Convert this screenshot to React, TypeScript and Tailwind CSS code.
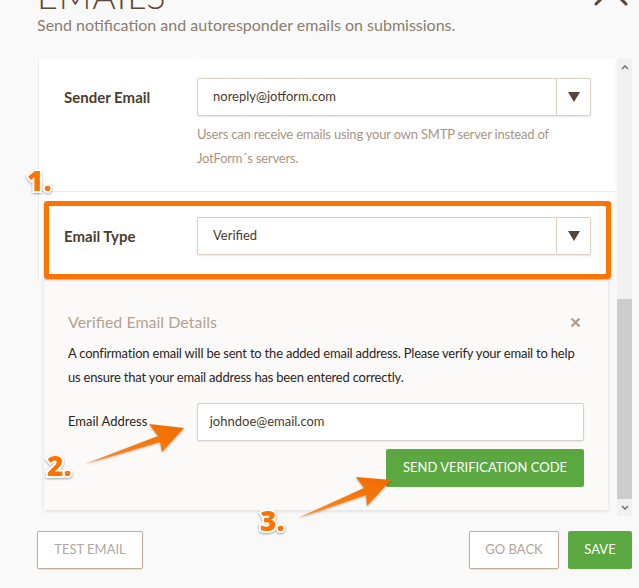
import React from "react";

const Caret = () => (
  <svg width="12" height="10" viewBox="0 0 12 10">
    <path d="M0 0h12L6 10z" fill="#56453a" />
  </svg>
);

const Select = ({ value }: { value: string }) => (
  <div className="flex h-[38px] w-[394px] items-stretch rounded-[2px] border border-[#dccfc3] bg-white shadow-[0_1px_2px_rgba(0,0,0,0.1)]">
    <div className="flex flex-1 items-center pl-[15px] text-[13px] text-[#4b3b2c]">{value}</div>
    <div className="flex w-[34px] items-center justify-center border-l border-[#dccfc3]">
      <Caret />
    </div>
  </div>
);

const Step = ({ n, className }: { n: string; className: string }) => (
  <span
    className={
      "absolute font-['Open_Sans',sans-serif] text-[28px] font-extrabold leading-none text-[#ff7300] [-webkit-text-stroke:4px_white] [paint-order:stroke_fill] drop-shadow-[0_1px_1px_rgba(0,0,0,0.35)] " +
      className
    }
  >
    {n}
  </span>
);

export default function App() {
  return (
    <div className="relative h-[588px] w-[639px] overflow-hidden bg-[#f9f9f9] font-['Lato',sans-serif]">
      <header className="pl-[37px]">
        <h1 className="-mt-[23px] text-[36px] font-light leading-none tracking-wide text-[#5b4837]">EMAILS</h1>
        <p className="mt-[2px] text-[16px] leading-[20px] text-[#8e7d6d]">
          Send notification and autoresponder emails on submissions.
        </p>
      </header>

      {/* close */}
      <svg className="absolute right-[11px] -top-[28px]" width="34" height="34" viewBox="0 0 34 34">
        <path d="M2 2l30 30M32 2L2 32" stroke="#5b4636" strokeWidth="3" strokeLinecap="round" />
      </svg>

      <div className="mt-[24px] flex h-[457px]">
        <div className="ml-[38px] flex w-[577px] flex-col">
          <div className="border-l border-[#ebebeb] bg-white">
            <div className="pb-[21px] pt-[19px]">
              <div className="flex items-center">
                <div className="w-[158px] pl-[25px] text-[15px] font-bold text-[#4e3d2e]">Sender Email</div>
                <Select value="noreply@jotform.com" />
              </div>
              <p className="ml-[158px] mt-[6px] w-[380px] text-[13px] leading-[24px] tracking-[-0.2px] text-[#a89684]">
                Users can receive emails using your own SMTP server instead of JotForm´s servers.
              </p>
            </div>
            <div className="flex items-center border-t border-[#ececec] pb-[24px] pt-[25px]">
              <div className="w-[158px] pl-[25px] text-[15px] font-bold text-[#4e3d2e]">Email Type</div>
              <Select value="Verified" />
            </div>
          </div>

          <div className="ml-[6px] w-[564px] bg-[#fbfaf9] px-[24px] pb-[23px] pt-[31px] shadow-[0_1px_4px_rgba(0,0,0,0.13)]">
            <div className="flex items-center justify-between">
              <h2 className="text-[16px] leading-[24px] text-[#b6a290]">Verified Email Details</h2>
              <svg className="mr-[3px]" width="11" height="11" viewBox="0 0 11 11">
                <path d="M1.5 1.5l8 8M9.5 1.5l-8 8" stroke="#b3a08e" strokeWidth="2.4" />
              </svg>
            </div>
            <p className="mt-[7px] text-[13px] leading-[24px] tracking-[-0.2px] text-[#2d2520]">
              A confirmation email will be sent to the added email address. Please verify your email to help us ensure
              that your email address has been entered correctly.
            </p>
            <div className="mt-[14px] flex items-center">
              <div className="w-[129px] text-[13px] text-[#2d2520]">Email Address</div>
              <div className="flex h-[38px] w-[388px] items-center rounded-[2px] border border-[#dccfc3] bg-white pl-[12px] text-[13px] text-[#4b3b2c] shadow-[0_1px_2px_rgba(0,0,0,0.08)]">
                johndoe@email.com
              </div>
            </div>
            <div className="mt-[8px] flex justify-end">
              <button className="h-[38px] w-[198px] rounded-[2px] bg-[#5ba840] text-[13px] text-white">
                SEND VERIFICATION CODE
              </button>
            </div>
          </div>
        </div>

        {/* scrollbar */}
        <div className="ml-[2px] flex w-[15px] flex-col bg-[#f1f1f1]">
          <div className="flex h-[16px] items-center justify-center">
            <svg width="8" height="5" viewBox="0 0 8 5">
              <path d="M1 4l3-3 3 3" stroke="#707070" strokeWidth="1.5" fill="none" />
            </svg>
          </div>
          <div className="h-[224px]" />
          <div className="h-[200px] bg-[#cdcdcd]" />
          <div className="flex flex-1 items-center justify-center">
            <svg width="8" height="5" viewBox="0 0 8 5">
              <path d="M1 1l3 3 3-3" stroke="#707070" strokeWidth="1.5" fill="none" />
            </svg>
          </div>
        </div>
      </div>

      <footer className="mt-[15px] flex pl-[37px] pr-[7px]">
        <button className="h-[38px] w-[106px] rounded-[2px] border border-[#c3ad98] bg-white text-[13px] text-[#b3a7a0] shadow-[0_1px_2px_rgba(0,0,0,0.1)]">
          TEST EMAIL
        </button>
        <div className="flex-1" />
        <button className="h-[38px] w-[90px] rounded-[2px] border border-[#c3ad98] bg-white text-[13px] text-[#b3a595] shadow-[0_1px_2px_rgba(0,0,0,0.1)]">
          GO BACK
        </button>
        <button className="ml-[9px] h-[38px] w-[64px] rounded-[2px] bg-[#5ba840] text-[13px] text-white">SAVE</button>
      </footer>

      {/* annotations */}
      <div className="absolute left-[44px] top-[201px] h-[78px] w-[567px] rounded-[3px] border-[5px] border-[#ff7300] shadow-[0_1px_2px_rgba(0,0,0,0.3)]" />
      <svg className="pointer-events-none absolute left-0 top-0" width="639" height="588" viewBox="0 0 639 588">
        <defs>
          <linearGradient id="og" x1="0" y1="1" x2="1" y2="0">
            <stop offset="0" stopColor="#ff8a1a" />
            <stop offset="1" stopColor="#f06a00" />
          </linearGradient>
        </defs>
        <g fill="url(#og)" style={{ filter: "drop-shadow(0 1px 1px rgba(0,0,0,0.3))" }}>
          <path d="M85 464 L158 436 L149 424 L184 428 L162 452 L160 442 Z" />
          <path d="M298 518 L364 488 L356 477 L391 480 L367 506 L366 495 Z" />
        </g>
      </svg>
      <Step n="1." className="left-[27px] top-[166px]" />
      <Step n="2." className="left-[47px] top-[451px]" />
      <Step n="3." className="left-[260px] top-[506px]" />
    </div>
  );
}
